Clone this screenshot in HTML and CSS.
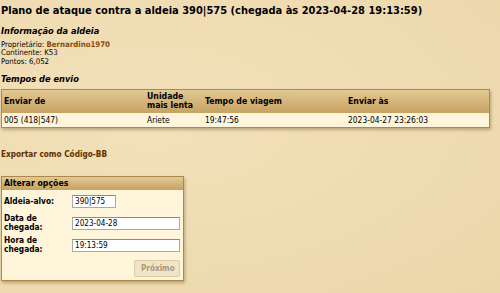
FILE: index.html
```html
<!DOCTYPE html>
<html lang="pt">
<head>
<meta charset="UTF-8">
<meta name="viewport" content="width=device-width, initial-scale=1.0">
<title>Plano de ataque</title>
<link rel="stylesheet" href="styles.css">
</head>
<body>
<h2 class="title">Plano de ataque contra a aldeia 390|575 (chegada às 2023-04-28 19:13:59)</h2>

<h4 class="section">Informação da aldeia</h4>
<div class="info">
    <div>Proprietário: <a href="#" class="owner">Bernardino1970</a></div>
    <div>Continente: K53</div>
    <div>Pontos: 6,052</div>
</div>

<h4 class="section times">Tempos de envio</h4>
<table class="vis plan">
    <colgroup>
        <col class="c1">
        <col class="c2">
        <col class="c3">
        <col>
    </colgroup>
    <tr>
        <th>Enviar de</th>
        <th>Unidade<br>mais lenta</th>
        <th>Tempo de viagem</th>
        <th>Enviar às</th>
    </tr>
    <tr>
        <td>005 (418|547)</td>
        <td>Ariete</td>
        <td>19:47:56</td>
        <td>2023-04-27 23:26:03</td>
    </tr>
</table>

<a href="#" class="export">Exportar como Código-BB</a>

<form class="options">
<table class="vis opts">
    <colgroup>
        <col class="lblcol">
        <col>
    </colgroup>
    <tr><th colspan="2">Alterar opções</th></tr>
    <tr>
        <td class="lbl">Aldeia-alvo:</td>
        <td><input type="text" class="short" value="390|575"></td>
    </tr>
    <tr>
        <td class="lbl">Data de<br>chegada:</td>
        <td><input type="text" value="2023-04-28"></td>
    </tr>
    <tr>
        <td class="lbl">Hora de<br>chegada:</td>
        <td><input type="text" value="19:13:59"></td>
    </tr>
    <tr>
        <td colspan="2" class="btn-cell"><input type="submit" value="Próximo" disabled></td>
    </tr>
</table>
</form>
</body>
</html>
```

FILE: styles.css
```css
body {
    margin: 0;
    padding: 0 1px;
    font-family: "Liberation Sans Narrow", "DejaVu Sans Condensed", "Liberation Sans", sans-serif;
    font-size: 7.8px;
    color: #000;
    background-color: #efdcb1;
    background-image: radial-gradient(ellipse at 30% 40%, #f3e1ba 0%, #ecd7aa 100%);
    height: 293px;
    overflow: hidden;
}
a {
    color: #603000;
    font-weight: bold;
    text-decoration: none;
}
.title {
    margin: 0;
    padding-top: 3px;
    font-size: 11px;
    line-height: 16px;
}
.section {
    margin: 6px 0 0 0;
    font-size: 9.2px;
    font-style: italic;
    line-height: 12px;
}
.info {
    padding-top: 4px;
    line-height: 8.3px;
}
.owner {
    color: #8a4a0c;
}
.times {
    margin-top: 7px;
}
table.vis {
    border-collapse: separate;
    border-spacing: 0;
    border: 1px solid #ad884c;
    box-shadow: 1px 2px 3px rgba(90, 60, 20, 0.35);
    table-layout: fixed;
}
table.vis th {
    text-align: left;
    font-weight: bold;
    font-size: 8.7px;
    line-height: 9.5px;
    background: linear-gradient(to bottom, #e3c993, #c6a262);
    padding: 2px 2px;
    white-space: nowrap;
}
table.vis td {
    background-color: #fff5da;
    font-size: 8.4px;
    padding: 2px 2px;
    line-height: 10px;
    vertical-align: middle;
    white-space: nowrap;
}
.plan {
    width: 489px;
    margin-top: 4px;
}
.plan th {
    height: 19px;
}
.plan .c1 { width: 143px; }
.plan .c2 { width: 58px; }
.plan .c3 { width: 143px; }
.export {
    display: block;
    margin-top: 21px;
    font-size: 8.2px;
    line-height: 10px;
}
.options {
    margin-top: 17px;
}
.opts {
    width: 183px;
}
.opts th {
    padding: 1px 3px;
    line-height: 10px;
}
.opts .lblcol { width: 68px; }
.opts td {
    height: 18px;
    padding: 2px 3px;
}
.opts td.lbl {
    font-weight: bold;
    font-size: 8.3px;
    line-height: 9px;
}
input[type="text"] {
    font-family: "Liberation Sans Narrow", "DejaVu Sans Condensed", "Liberation Sans", sans-serif;
    font-size: 8.1px;
    width: 108px;
    height: 13px;
    box-sizing: border-box;
    border: 1px solid #a9a9a9;
    border-top-color: #8a8a8a;
    padding: 0 2px;
    margin: 0;
    background: #fff;
    vertical-align: middle;
}
input.short {
    width: 44px;
}
.opts td.btn-cell {
    text-align: right;
    padding: 3px 3px 3px 3px;
}
input[type="submit"] {
    font-family: "Liberation Sans Narrow", "DejaVu Sans Condensed", "Liberation Sans", sans-serif;
    font-weight: bold;
    font-size: 8.1px;
    color: #a89a80;
    width: 46px;
    height: 17px;
    border: 1px solid #dccba4;
    border-radius: 2px;
    background-color: #f1e3c4;
    margin: 0;
    vertical-align: middle;
}
```
